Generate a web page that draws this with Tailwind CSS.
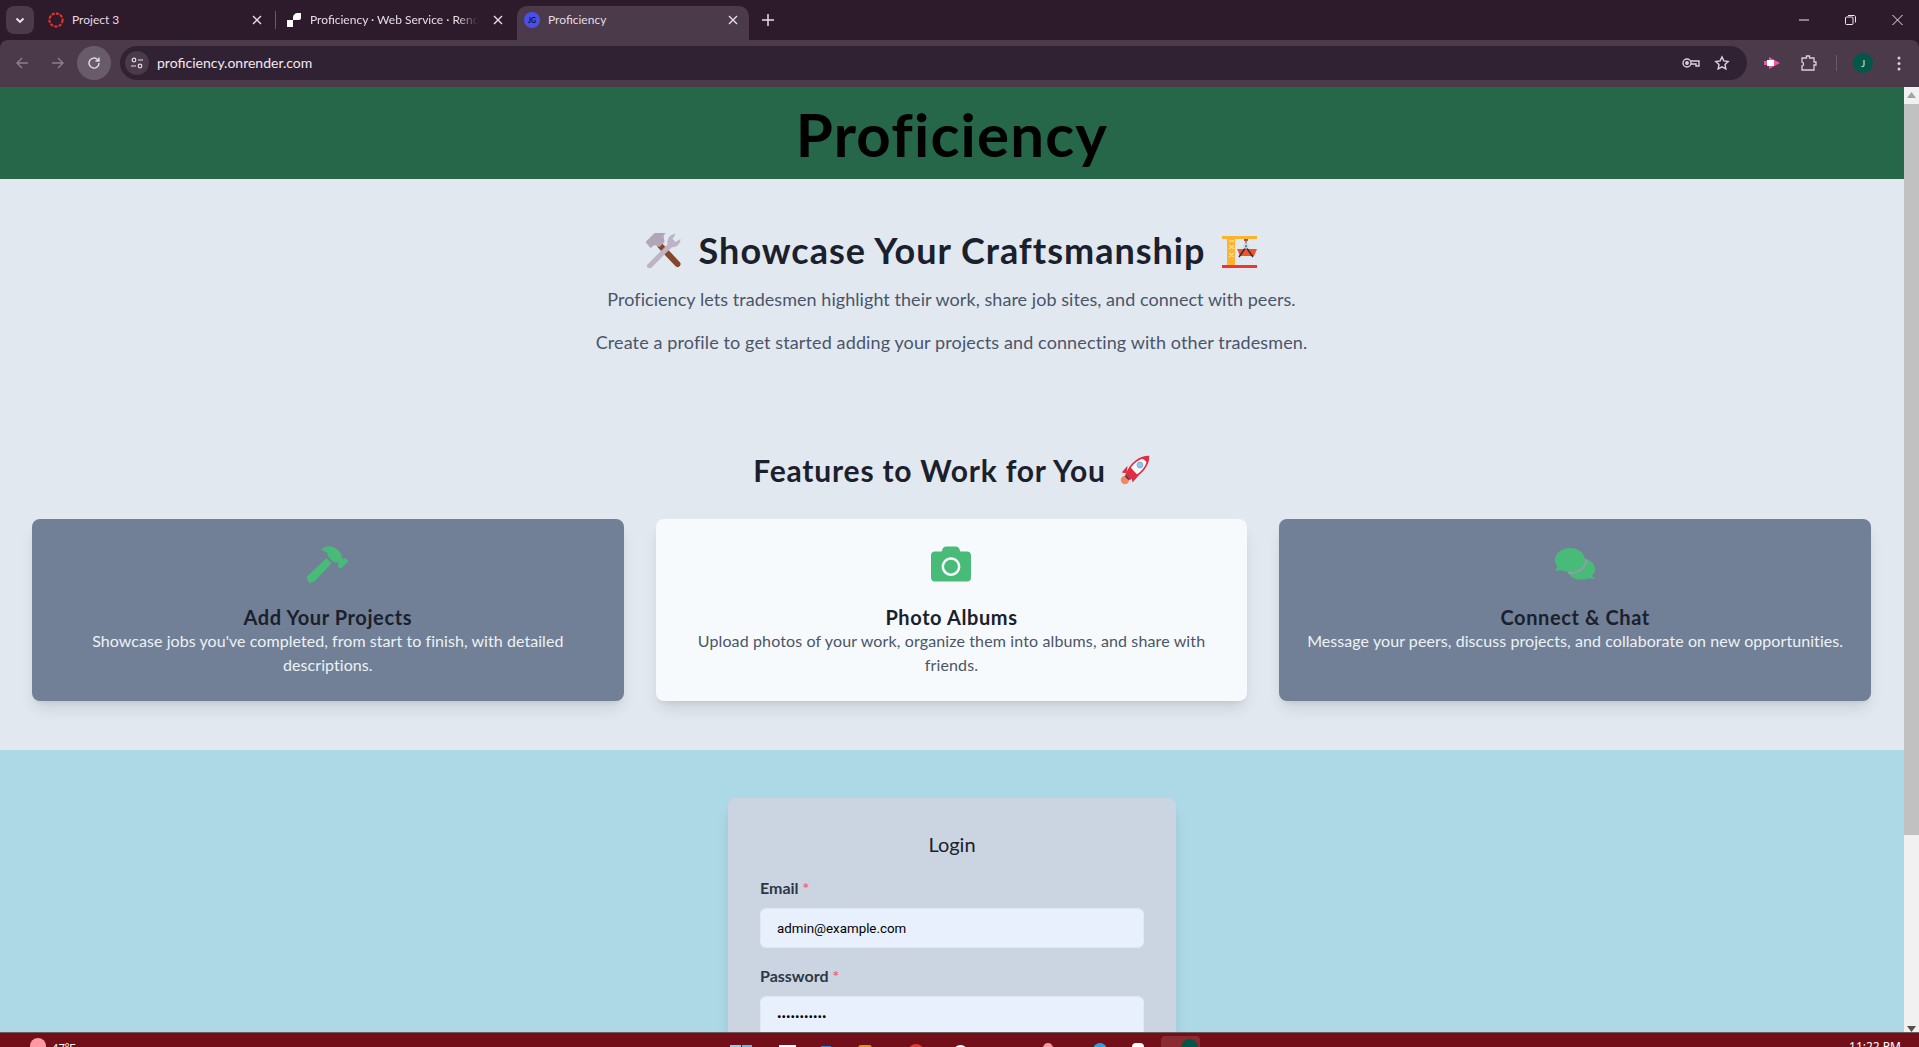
<!DOCTYPE html>
<html lang="en">
<head>
<meta charset="utf-8">
<title>Proficiency</title>
<script src="https://cdn.jsdelivr.net/npm/@tailwindcss/browser@4"></script>
</head>
<body class="h-[1047px] w-[1919px] overflow-hidden bg-[#2d1b2c] font-['Lato',sans-serif]">
<div class="flex h-[1047px] flex-col">

  <!-- tab strip -->
  <div class="flex h-[40px] shrink-0 items-start bg-[#2d1b2c] pl-[6px] pt-[6px] text-[12px] text-[#e6dde6]">
    <div class="flex h-[28px] w-[28px] shrink-0 items-center justify-center rounded-[8px] bg-[#4a3a4a]">
      <svg width="12" height="12" viewBox="0 0 12 12" fill="none" stroke="#efe6ef" stroke-width="1.8"><path d="M2.500 4.500 6 8l3.500-3.500"/></svg>
    </div>
    <div class="ml-[14px] flex h-[28px] w-[227px] shrink-0 items-center">
      <svg width="16" height="16" viewBox="0 0 16 16" fill="none"><circle cx="8" cy="8" r="6.600" stroke="#e8352e" stroke-width="2" stroke-dasharray="3.200 1.200"/></svg>
      <span class="ml-[8px] flex-1">Project 3</span>
      <svg class="mr-[13px]" width="10" height="10" viewBox="0 0 10 10" stroke="#e6dde6" stroke-width="1.400"><path d="M1 1l8 8M9 1 1 9"/></svg>
    </div>
    <div class="mt-[5px] h-[18px] w-px shrink-0 bg-[#6b5a6b]"></div>
    <div class="ml-[11px] flex h-[28px] w-[228px] shrink-0 items-center">
      <svg width="14" height="14" viewBox="0 0 14 14" fill="#fff"><path d="M0 7h6v7H0zM6 5c0-3 2-5 5-5h3v5c0 1-1 2-2 2H6z"/></svg>
      <span class="ml-[9px] w-[168px] overflow-hidden whitespace-nowrap [mask-image:linear-gradient(to_right,black_88%,transparent)]">Proficiency · Web Service · Render</span>
      <svg class="ml-[15px]" width="10" height="10" viewBox="0 0 10 10" stroke="#e6dde6" stroke-width="1.400"><path d="M1 1l8 8M9 1 1 9"/></svg>
    </div>
    <div class="ml-[2px] flex h-[34px] w-[232px] shrink-0 items-start rounded-t-[10px] bg-[#4a3a4a] pl-[7px] pt-[6px]">
      <div class="flex h-[16px] w-[16px] items-center justify-center overflow-hidden rounded-full bg-[#4b4fe8] text-[7px] font-bold leading-none text-[#10102a]">JG</div>
      <span class="ml-[8px] flex-1 leading-[16px]">Proficiency</span>
      <svg class="mr-[11px] mt-[3px]" width="10" height="10" viewBox="0 0 10 10" stroke="#e6dde6" stroke-width="1.400"><path d="M1 1l8 8M9 1 1 9"/></svg>
    </div>
    <svg class="ml-[13px] mt-[8px]" width="12" height="12" viewBox="0 0 12 12" stroke="#e6dde6" stroke-width="1.500"><path d="M6 0v12M0 6h12"/></svg>
    <div class="ml-auto flex pt-[8px]">
      <svg class="mr-[36px]" width="10" height="12" viewBox="0 0 10 12" stroke="#efe6ef" stroke-width="1"><path d="M0 6h10"/></svg>
      <svg class="mr-[36px]" width="11" height="12" viewBox="0 0 11 12" fill="none" stroke="#efe6ef" stroke-width="1"><rect x=".5" y="3" width="7.500" height="7.500" rx="1"/><path d="M3 1.500h6c.8 0 1.500.7 1.500 1.500v5.500"/></svg>
      <svg class="mr-[16px]" width="11" height="12" viewBox="0 0 11 12" stroke="#efe6ef" stroke-width="1"><path d="M.5 1l10 10M10.500 1l-10 10"/></svg>
    </div>
  </div>

  <!-- toolbar -->
  <div class="flex h-[47px] shrink-0 items-start rounded-t-[8px] bg-[#4a3a4a] pt-[6px]">
    <svg class="ml-[15px] mt-[10px]" width="14" height="14" viewBox="0 0 14 14" fill="none" stroke="#8c7f8c" stroke-width="1.400"><path d="M13 7H2M7 2 2 7l5 5"/></svg>
    <svg class="ml-[22px] mt-[10px]" width="14" height="14" viewBox="0 0 14 14" fill="none" stroke="#8c7f8c" stroke-width="1.400"><path d="M1 7h11M7 2l5 5-5 5"/></svg>
    <div class="ml-[12px] flex h-[34px] w-[34px] items-center justify-center rounded-full bg-[#6a5b6a]">
      <svg width="14" height="14" viewBox="0 0 14 14" fill="none" stroke="#e6dde6" stroke-width="1.400"><path d="M12 7a5 5 0 1 1-1.500-3.500L12 5M12 1.500V5H8.500"/></svg>
    </div>
    <div class="ml-[9px] flex h-[34px] w-[1627px] items-center rounded-full bg-[#302232] pl-[5px] pr-[17px]">
      <div class="flex h-[24px] w-[24px] items-center justify-center rounded-full bg-[#4a3a4a]">
        <svg width="14" height="14" viewBox="0 0 14 14" fill="none" stroke="#e6dde6" stroke-width="1.200"><circle cx="4" cy="4" r="1.800"/><path d="M8 4h5M1 10h5"/><circle cx="10" cy="10" r="1.800"/></svg>
      </div>
      <span class="ml-[8px] flex-1 text-[14px] leading-[18px] text-[#f1e9f1]">proficiency.onrender.com</span>
      <svg class="mr-[14px]" width="18" height="12" viewBox="0 0 18 12" fill="none" stroke="#dccfdc" stroke-width="1.400"><circle cx="5" cy="6" r="4"/><circle cx="5" cy="6" r="1.200" fill="#dccfdc"/><path d="M9 4h8v5h-3V7H9"/></svg>
      <svg width="16" height="16" viewBox="0 0 24 24" fill="none" stroke="#dccfdc" stroke-width="2.200"><path d="m12 3 2.800 5.900 6.400.9-4.600 4.500 1.100 6.400L12 17.700l-5.700 3 1.100-6.400-4.600-4.500 6.400-.9z"/></svg>
    </div>
    <svg class="ml-[17px] mt-[10px]" width="16" height="14" viewBox="0 0 16 14"><path d="M0 5h5V1l11 6-11 6V9H0z" fill="#ee55aa"/><rect x="3" y="4" width="7" height="6" fill="#fff"/></svg>
    <svg class="ml-[21px] mt-[9px]" width="16" height="16" viewBox="0 0 16 16" fill="none" stroke="#dccfdc" stroke-width="1.300"><path d="M1 3h4.500V1h3v2H13v4h2v3h-2v5H1v-4c2 0 2-4 0-4z"/></svg>
    <div class="ml-[19px] mt-[9px] h-[16px] w-px bg-[#6b5a6b]"></div>
    <div class="ml-[16px] mt-[7px] flex h-[20px] w-[20px] items-center justify-center rounded-full bg-[#00584a] text-[10px] text-[#d5ebe4]">J</div>
    <svg class="ml-[24px] mt-[10px]" width="4" height="15" viewBox="0 0 4 15" fill="#dccfdc"><circle cx="2" cy="2" r="1.500"/><circle cx="2" cy="7.500" r="1.500"/><circle cx="2" cy="13" r="1.500"/></svg>
  </div>

  <!-- viewport -->
  <div class="flex h-[945px] shrink-0 overflow-hidden">
    <main class="h-[945px] w-[1904px] shrink-0 overflow-hidden">
      <header class="flex h-[92px] justify-center bg-[#276749] pt-[10px]">
        <h1 class="text-[60px] font-bold leading-[75px] tracking-[1.2px] text-black">Proficiency</h1>
      </header>

      <section class="h-[571px] bg-[#e2e8f0] pl-8 pt-[48px]">
        <h2 class="flex h-[46px] w-[1839px] items-center justify-center gap-[17px] text-[36px] font-bold tracking-[1px] text-[#1a202c]">
          <svg width="37" height="36" viewBox="0 0 36 36" fill="none">
            <path d="M15 14 32 32" stroke="#85462e" stroke-width="6" stroke-linecap="round"/>
            <path d="M0 10 9 1h11l-2 3 1 6-5 5-5-2-4 3z" fill="#b1a6b8"/>
            <path d="M4 34 27 11" stroke="#bdb3c3" stroke-width="5" stroke-linecap="round"/>
            <path d="M23 14a8 8 0 0 1 7-12l-3 5 3 3 5-3a8 8 0 0 1-12 7z" fill="#bdb3c3"/>
          </svg>
          <span>Showcase Your Craftsmanship</span>
          <svg width="36" height="36" viewBox="0 0 36 36" fill="none">
            <path d="M0 4h35v3H0z" fill="#fdb32b"/>
            <path d="M5 5h8v28H5z" fill="#fdb32b"/>
            <path d="M7 9h5M7 13l5 4M12 13l-5 4M7 21l5 4M12 21l-5 4" stroke="#f5dca0" stroke-width="1.500"/>
            <path d="M22 7h4v2h-4z" fill="#e8352e"/>
            <path d="M24 8v8" stroke="#66757f" stroke-width="1.500"/>
            <path d="M15 17h20l-3 7H18z" fill="#f4502c"/>
            <path d="M24 15l-7 10M24 15l7 10" stroke="#292f33" stroke-width="1.500"/>
            <circle cx="24" cy="14" r="2" stroke="#ccd6dd" stroke-width="1.500"/>
            <path d="M0 33h35v3H0z" fill="#f4352e"/>
          </svg>
        </h2>
        <p class="mt-[12px] w-[1839px] text-center text-[18px] leading-[28px] tracking-[0.05px] text-[#4a5568]">Proficiency lets tradesmen highlight their work, share job sites, and connect with peers.</p>
        <p class="mt-[15px] w-[1839px] text-center text-[18px] leading-[28px] tracking-[0.12px] text-[#4a5568]">Create a profile to get started adding your projects and connecting with other tradesmen.</p>

        <h3 class="mt-[94px] flex h-[40px] w-[1839px] items-center justify-center gap-[14px] text-[30px] font-bold tracking-[0.8px] text-[#1a202c]">
          <span>Features to Work for You</span>
          <svg width="30" height="30" viewBox="0 0 36 36" fill="none">
            <circle cx="6" cy="30" r="5" fill="#f4875c"/>
            <path d="M9 13 2 21l6 1zM23 24l-8 9-1-6z" fill="#dd2e44"/>
            <path d="M34 2C24 2 13 10 9 21l6 6c11-4 19-15 19-25z" fill="#f5f8fa" stroke="#dd2e44" stroke-width="2"/>
            <path d="M25 4c4 1 7 4 8 7 1-3 2-7 1-9-3 0-6 1-9 2z" fill="#dd2e44"/>
            <path d="M12 14l9 10-9 6-6-6z" fill="#dd2e44"/>
            <path d="M7 24l5 5-2 1-4-4z" fill="#4c3f6b"/>
            <circle cx="24" cy="12" r="3.500" fill="#88c9f9" stroke="#99aab5" stroke-width="1.200"/>
          </svg>
        </h3>

        <div class="mt-[29px] grid w-[1839px] grid-cols-3 gap-8 text-center">
          <article class="h-[182px] rounded-[8px] bg-[#718096] p-6 shadow-lg">
            <div class="mb-[18px] flex h-[42px] items-center justify-center">
              <svg width="41" height="37" viewBox="0 0 576 512" fill="#48bb78"><path d="M571.31 193.94l-22.63-22.63c-6.25-6.25-16.38-6.25-22.63 0l-11.31 11.31-28.9-28.9c5.63-21.31.36-44.9-16.35-61.61l-45.25-45.25c-62.48-62.48-163.79-62.48-226.28 0l90.51 45.25v18.75c0 16.97 6.74 33.25 18.75 45.25l49.14 49.14c16.71 16.71 40.3 21.98 61.61 16.35l28.9 28.9-11.31 11.31c-6.25 6.25-6.25 16.38 0 22.63l22.63 22.63c6.25 6.25 16.38 6.25 22.63 0l90.51-90.51c6.23-6.24 6.23-16.37-.02-22.62zm-286.72-15.2c-3.7-3.7-6.84-7.79-9.85-11.95L19.64 404.96c-25.57 23.88-26.26 64.19-1.53 88.93s65.05 24.05 88.93-1.53l238.13-255.07c-3.96-2.91-7.9-5.87-11.44-9.41l-49.14-49.14z"/></svg>
            </div>
            <h4 class="h-[26px] text-[20px] font-bold leading-[28px] tracking-[0.6px] text-[#1a202c]">Add Your Projects</h4>
            <p class="text-[16px] leading-[24px] tracking-[0.06px] text-[#edf2f7]">Showcase jobs you've completed, from start to finish, with detailed descriptions.</p>
          </article>
          <article class="h-[182px] rounded-[8px] bg-[#f7fafc] p-6 shadow-lg">
            <div class="mb-[18px] flex h-[42px] items-center justify-center">
              <svg width="40" height="40" viewBox="0 0 512 512" fill="#48bb78"><path d="M512 144v288c0 26.5-21.5 48-48 48H48c-26.5 0-48-21.5-48-48V144c0-26.5 21.5-48 48-48h88l12.3-32.9c7-18.7 24.9-31.1 44.9-31.1h125.5c20 0 37.9 12.4 44.9 31.1L376 96h88c26.500 0 48 21.500 48 48zM376 288c0-66.2-53.8-120-120-120s-120 53.8-120 120 53.800 120 120 120 120-53.800 120-120zm-32 0c0 48.500-39.500 88-88 88s-88-39.500-88-88 39.500-88 88-88 88 39.500 88 88z"/></svg>
            </div>
            <h4 class="h-[26px] text-[20px] font-bold leading-[28px] tracking-[0.6px] text-[#1a202c]">Photo Albums</h4>
            <p class="text-[16px] leading-[24px] tracking-[0.13px] text-[#4a5568]">Upload photos of your work, organize them into albums, and share with friends.</p>
          </article>
          <article class="h-[182px] rounded-[8px] bg-[#718096] p-6 shadow-lg">
            <div class="mb-[18px] flex h-[42px] items-center justify-center">
              <svg width="41" height="32" viewBox="0 0 41 32" fill="#48bb78">
                <clipPath id="rear-bubble"><ellipse cx="26" cy="21" rx="14" ry="10.500"/></clipPath>
                <ellipse cx="26" cy="21" rx="14" ry="10.500"/>
                <path d="M34 25l6 6-10-1z"/>
                <ellipse cx="15" cy="12" rx="17" ry="14" fill="#939cae" clip-path="url(#rear-bubble)"/>
                <ellipse cx="15" cy="12" rx="15" ry="12"/>
                <path d="M4 17 0 23l10-1z"/>
              </svg>
            </div>
            <h4 class="h-[26px] text-[20px] font-bold leading-[28px] tracking-[0.6px] text-[#1a202c]">Connect &amp; Chat</h4>
            <p class="text-[16px] leading-[24px] tracking-[0.07px] text-[#edf2f7]">Message your peers, discuss projects, and collaborate on new opportunities.</p>
          </article>
        </div>
      </section>

      <section class="h-[282px] bg-[#add8e6] pt-[48px]">
        <div class="mx-auto h-[300px] w-[448px] rounded-[8px] bg-[#cbd5e1] p-8 shadow-lg">
          <h2 class="mb-[18px] text-center text-[20px] leading-[28px] text-[#1a202c]">Login</h2>
          <label class="mb-2 block text-[16px] font-bold leading-[24px] text-[#2d3748]">Email <span class="text-[#f56565]">*</span></label>
          <input readonly value="admin@example.com" class="mb-4 block h-[40px] w-[384px] rounded-[6px] border border-[#e2e8f0] bg-[#e8f0fe] pl-[16px] font-['Roboto',sans-serif] text-[13.33px] text-black">
          <label class="mb-2 block text-[16px] font-bold leading-[24px] text-[#2d3748]">Password <span class="text-[#f56565]">*</span></label>
          <input readonly type="password" value="password123" class="block h-[40px] w-[384px] rounded-[6px] border border-[#e2e8f0] bg-[#e8f0fe] pl-[16px] font-['Roboto',sans-serif] text-[13.33px] text-black">
        </div>
      </section>
    </main>

    <!-- scrollbar -->
    <div class="flex h-[945px] w-[15px] shrink-0 flex-col items-center bg-[#f1f1f1]">
      <svg class="mt-[5px]" width="9" height="6" viewBox="0 0 9 6" fill="#a3a3a3"><path d="M4.500 0 9 6H0z"/></svg>
      <div class="mt-[6px] h-[732px] w-[15px] bg-[#c1c1c1]"></div>
      <svg class="mt-[191px]" width="9" height="6" viewBox="0 0 9 6" fill="#505050"><path d="M0 0h9L4.500 6z"/></svg>
    </div>
  </div>

  <!-- taskbar -->
  <footer class="flex h-[15px] shrink-0 items-start overflow-hidden border-t border-[#6e5a5c] bg-[#720f18] pt-[5px] text-[12px] leading-[14px] text-white">
    <div class="ml-[30px] h-[16px] w-[16px] shrink-0 rounded-full bg-[#ff9aa5]"></div>
    <span class="ml-[6px] mt-[3px] w-[22px] shrink-0 text-[11px]">47°F</span>
    <div class="ml-[656px] mt-[7px] grid h-[20px] w-[22px] shrink-0 grid-cols-2 gap-px"><i class="bg-[#7fd3f7]"></i><i class="bg-[#4fc3f7]"></i></div>
    <div class="ml-[27px] mt-[7px] h-[20px] w-[17px] shrink-0 bg-white"></div>
    <div class="ml-[25px] mt-[8px] h-[20px] w-[10px] shrink-0 bg-[#1e88e5]"></div>
    <div class="ml-[27px] mt-[7px] h-[20px] w-[14px] shrink-0 rounded-t-[3px] bg-[#d49a12]"></div>
    <div class="ml-[36px] mt-[6px] h-[20px] w-[16px] shrink-0 rounded-full bg-[#e23b30]"></div>
    <div class="ml-[29px] mt-[7px] h-[20px] w-[15px] shrink-0 rounded-full bg-white"></div>
    <div class="ml-[75px] mt-[5px] h-[20px] w-[10px] shrink-0 rounded-t-full bg-[#f59aa0]"></div>
    <div class="ml-[40px] mt-[5px] h-[20px] w-[14px] shrink-0 rounded-t-full bg-[#2b9fe0]"></div>
    <div class="ml-[25px] mt-[5px] h-[20px] w-[12px] shrink-0 rounded-t-[4px] bg-white"></div>
    <div class="ml-[17px] mt-[-2px] flex h-[20px] w-[39px] shrink-0 items-start justify-end rounded-t-[4px] bg-[#8a2b32] pr-[2px]">
      <div class="mt-[3px] h-[17px] w-[17px] rounded-full bg-[#00584a]"></div>
    </div>
    <span class="ml-auto mr-[18px] mt-[2px] font-['Noto_Sans',sans-serif]">11:22 PM</span>
  </footer>
</div>
</body>
</html>
